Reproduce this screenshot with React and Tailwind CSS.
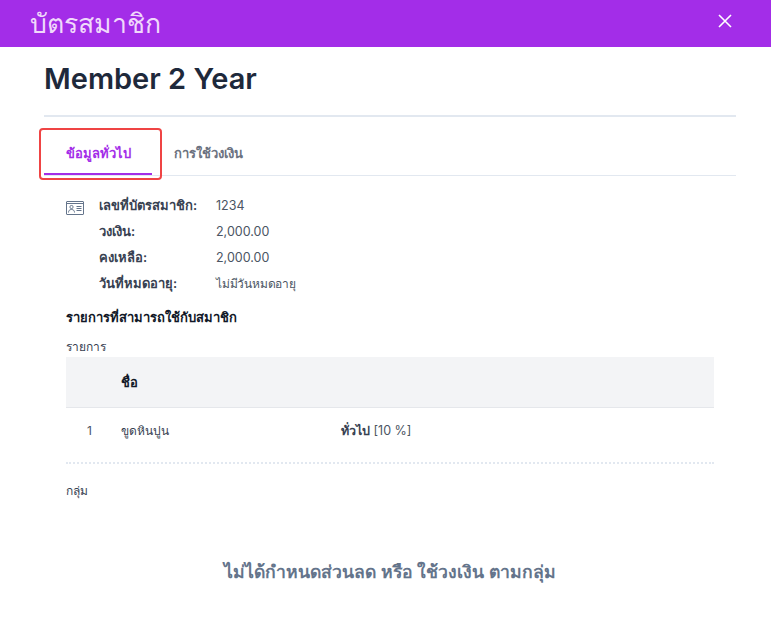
import React from "react";

function Row({ label, value, icon, valueClass = "text-[12.5px]" }) {
  return (
    <div className="flex h-[26px] items-center">
      <div className="w-[33px] shrink-0 pt-[3px]">{icon}</div>
      <div className="w-[117px] shrink-0 text-[13px] font-semibold text-[#374151]">{label}</div>
      <div className={`${valueClass} text-[#4b5563]`}>{value}</div>
    </div>
  );
}

function CardIcon() {
  return (
    <svg width="18" height="14" viewBox="0 0 18 14" fill="none" stroke="#64748b" strokeWidth="1" className="block">
      <rect x="0.5" y="0.5" width="17" height="13" rx="0.5" />
      <path d="M0.5 2.5H17.5" />
      <rect x="4" y="4.5" width="3" height="3" rx="1.2" />
      <path d="M2.5 11.5c0-1.8 1-3 3-3s3 1.2 3 3" />
      <path d="M10.5 5.5H15.5M10.5 7.5H15.5M10.5 9.5H15.5" />
    </svg>
  );
}

export default function App() {
  return (
    <div className="min-h-[629px] bg-white font-['Inter','Noto_Sans',sans-serif] text-[#111827]">
      <header className="flex h-[47px] items-center justify-between bg-[#a32de8] pl-[30px] pr-[39px]">
        <h1 className="text-[26.6px] leading-none text-[#f0d9fb]">บัตรสมาชิก</h1>
        <svg width="14" height="14" viewBox="0 0 14 14" stroke="#ffffff" strokeWidth="1.6" className="mb-[6px]">
          <path d="M1 1L13 13M13 1L1 13" />
        </svg>
      </header>

      <main className="px-[35px]">
        <div className="ml-[9px] flex h-[70px] items-start border-b-2 border-[#e2e8f0] pt-[14px]">
          <h2 className="text-[29px] font-semibold leading-9 text-[#1e293b]">Member 2 Year</h2>
        </div>

        <div className="relative ml-[9px] mt-[10px] flex h-[49px] border-b border-[#e2e8f0]">
          <div className="flex w-[108px] items-center justify-center border-b-2 border-[#a32de8] pt-[7px] text-[13px] font-semibold text-[#a32de8]">
            ข้อมูลทั่วไป
          </div>
          <div className="flex w-[112px] items-center justify-center pt-[5px] text-[13px] font-semibold text-[#6b7280]">
            การใช้วงเงิน
          </div>
          <div className="absolute -left-[5px] top-[1px] h-[52px] w-[123px] rounded border-[2px] border-[#ef4444]" />
        </div>

        <section className="ml-[31px] mr-[22px] pt-[17px]">
          <Row icon={<CardIcon />} label="เลขที่บัตรสมาชิก:" value="1234" />
          <Row label="วงเงิน:" value="2,000.00" />
          <Row label="คงเหลือ:" value="2,000.00" />
          <Row label="วันที่หมดอายุ:" value="ไม่มีวันหมดอายุ" valueClass="text-xs tracking-[-0.2px]" />

          <h3 className="mt-[10px] text-[13px] font-semibold leading-5 text-[#111827]">รายการที่สามารถใช้กับสมาชิก</h3>

          <p className="mt-[12px] text-xs leading-4 text-[#374151]">รายการ</p>
          <div className="mt-[2px] flex h-[51px] items-center border-b border-[#e5e7eb] bg-[#f3f4f6] pt-[1px]">
            <div className="pl-[55px] text-[13px] font-semibold text-[#111827]">ชื่อ</div>
          </div>
          <div className="flex h-[46px] items-center text-xs">
            <div className="w-[55px] pr-[29px] text-right text-[#4b5563]">1</div>
            <div className="w-[220px] text-[#374151]">ขูดหินปูน</div>
            <div className="text-[12.5px] text-[#4b5563]"><span className="font-semibold text-[#374151]">ทั่วไป</span> [10 %]</div>
          </div>
          <div className="mt-[8px] border-b-2 border-dotted border-[#e2e8f0]" />

          <p className="mt-[19px] text-xs leading-4 text-[#374151]">กลุ่ม</p>

          <p className="mt-[61px] text-center text-[17.6px] font-semibold leading-6 text-[#64748b]">ไม่ได้กำหนดส่วนลด หรือ ใช้วงเงิน ตามกลุ่ม</p>
        </section>
      </main>
    </div>
  );
}
